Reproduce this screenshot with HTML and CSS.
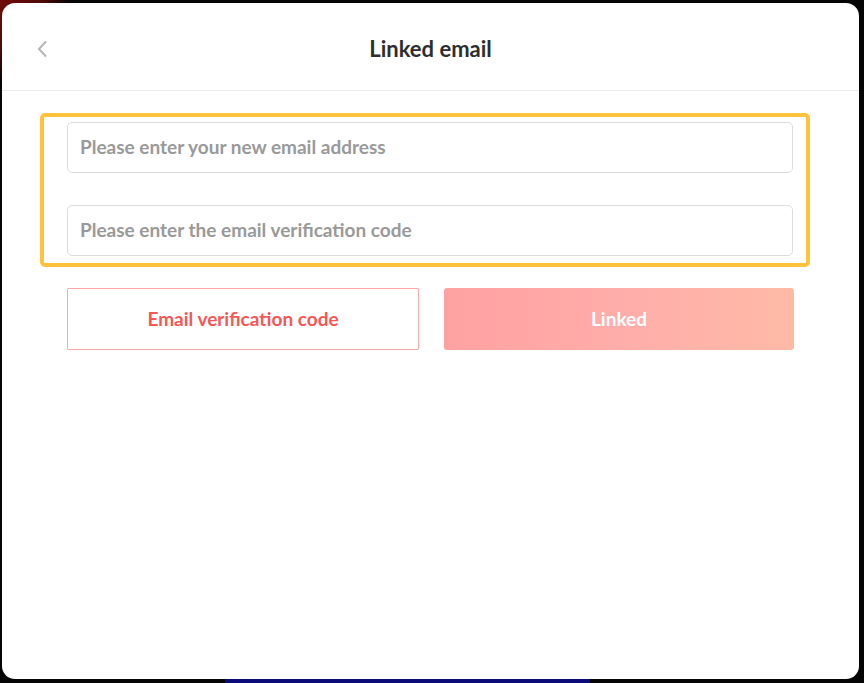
FILE: index.html
```html
<!DOCTYPE html>
<html lang="en">
<head>
<meta charset="utf-8">
<title>Linked email</title>
<link rel="stylesheet" href="styles.css">
</head>
<body>
<div class="backdrop">
  <div class="modal">
    <header class="modal-header">
      <button class="back" aria-label="Back">
        <svg width="12" height="18" viewBox="0 0 12 18"><path d="M10 1.5 L3 9 L10 16.5" fill="none" stroke="#b5b5b5" stroke-width="2"/></svg>
      </button>
      <h1 class="title">Linked email</h1>
    </header>
    <div class="content">
      <div class="highlight">
        <input class="field" type="text" placeholder="Please enter your new email address">
        <input class="field" type="text" placeholder="Please enter the email verification code">
      </div>
      <div class="actions">
        <button class="btn btn-outline">Email verification code</button>
        <button class="btn btn-fill">Linked</button>
      </div>
    </div>
  </div>
</div>
</body>
</html>
```

FILE: styles.css
```css
html, body {
  margin: 0;
  padding: 0;
}
body {
  width: 864px;
  height: 683px;
  overflow: hidden;
  background:
    radial-gradient(ellipse 70px 80px at 0 0, #700c0c 0%, #500909 60%, rgba(0,0,0,0) 100%) no-repeat,
    linear-gradient(90deg, rgba(0,0,0,0) 225px, #0a0a78 225px, #0a0a78 590px, rgba(0,0,0,0) 590px) left bottom / 100% 4px no-repeat,
    #050505;
  font-family: Lato, "Open Sans", sans-serif;
}
.backdrop {
  padding: 3px 5px 4px 2px;
  height: 683px;
  box-sizing: border-box;
}
.modal {
  width: 857px;
  height: 676px;
  background: #fff;
  border-radius: 13px;
  overflow: hidden;
}
.modal-header {
  position: relative;
  height: 87px;
  border-bottom: 1px solid #e9e9e9;
  display: flex;
  align-items: center;
  justify-content: center;
}
.back {
  position: absolute;
  left: 33px;
  top: 36px;
  padding: 0;
  border: 0;
  background: none;
  width: 14px;
  height: 20px;
  display: flex;
  align-items: center;
  justify-content: center;
}
.title {
  margin: 0;
  font-size: 22px;
  font-weight: 700;
  color: #2e2e2e;
  padding-top: 3px;
}
.content {
  padding: 22px 0 0 38px;
}
.highlight {
  box-sizing: border-box;
  width: 770px;
  border: 4px solid #ffc23c;
  border-radius: 5px;
  padding: 5px 13px 7px 23px;
  display: flex;
  flex-direction: column;
  gap: 32px;
}
.field {
  display: block;
  width: 100%;
  box-sizing: border-box;
  height: 51px;
  border: 1px solid #dcdcdc;
  border-radius: 5px;
  padding: 0 12px 2px;
  font-family: Lato, "Open Sans", sans-serif;
  font-size: 19px;
  font-weight: 700;
  color: #333;
  outline: none;
}
.field::placeholder {
  color: #999;
}
.actions {
  display: flex;
  gap: 25px;
  margin: 21px 0 0 27px;
  width: 727px;
}
.btn {
  flex: 1;
  height: 62px;
  font-family: Lato, "Open Sans", sans-serif;
  font-size: 19px;
  font-weight: 700;
  cursor: pointer;
  padding: 0 0 2px;
}
.btn-outline {
  background: #fff;
  border: 1px solid #ffa6a6;
  border-radius: 1px;
  color: #f55656;
}
.btn-fill {
  border: 0;
  border-radius: 3px;
  color: #fff;
  background: linear-gradient(90deg, #ffa1a2 0%, #ffadaa 50%, #ffbaa6 100%);
}
```
